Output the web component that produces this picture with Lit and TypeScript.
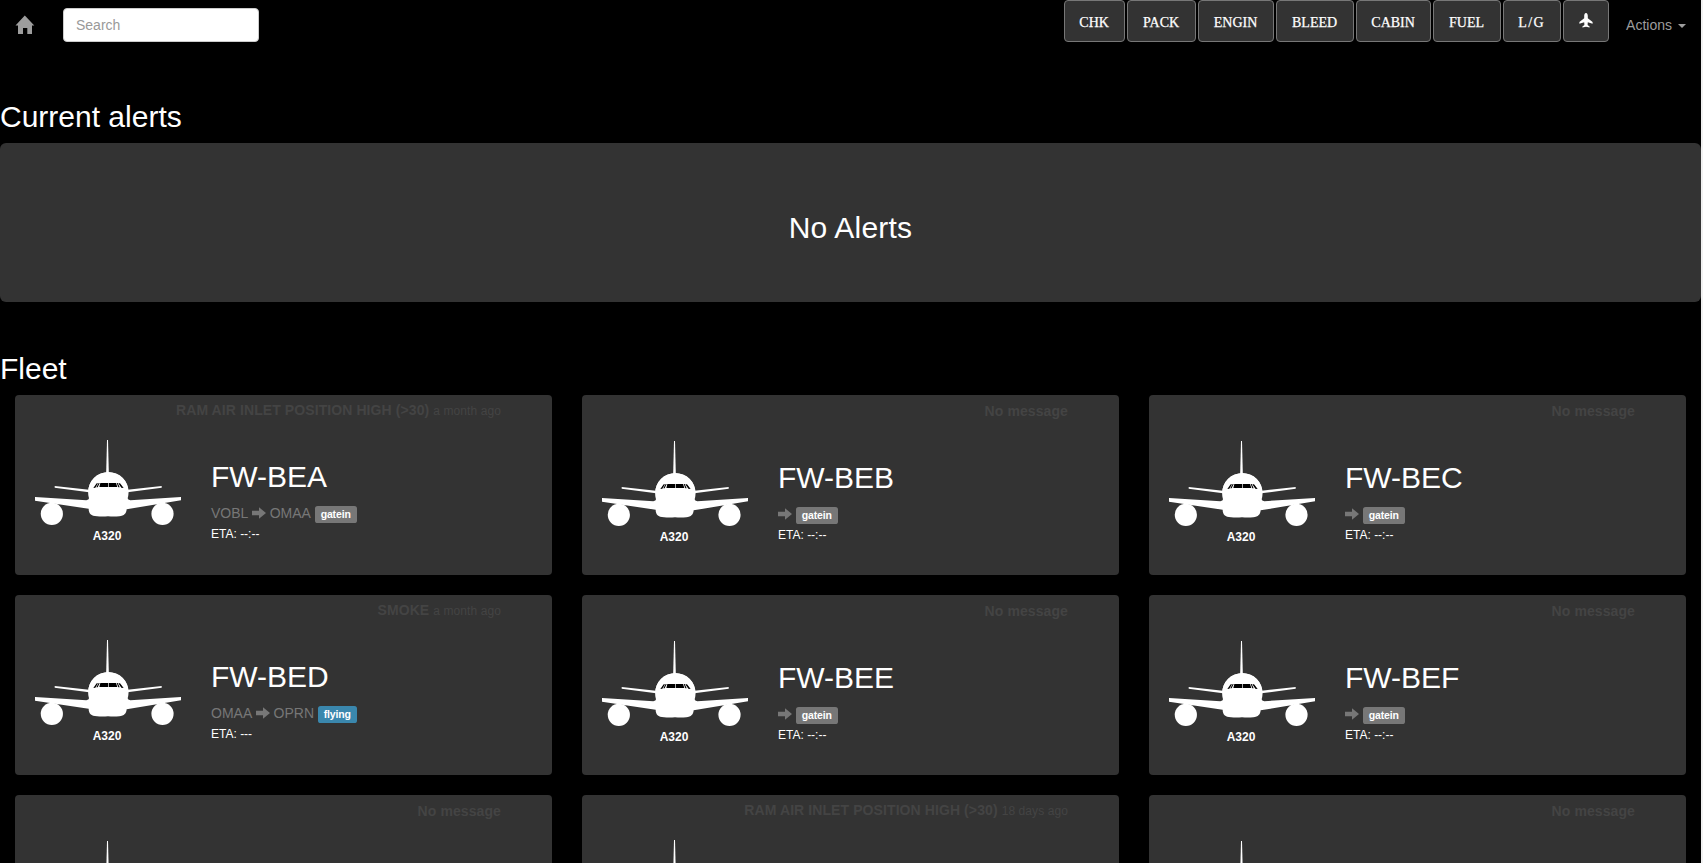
import { LitElement, html, css, svg, nothing } from "lit";
import { customElement, property } from "lit/decorators.js";
import { styleMap } from "lit/directives/style-map.js";

interface Aircraft {
  name: string;
  message?: string;
  age?: string;
  from?: string;
  to?: string;
  status: "gatein" | "flying";
  eta: string;
}

const systems = [
  { label: "CHK", width: 61 },
  { label: "PACK", width: 69 },
  { label: "ENGIN", width: 76 },
  { label: "BLEED", width: 78 },
  { label: "CABIN", width: 75 },
  { label: "FUEL", width: 68 },
  { label: "L/G", width: 58, spacing: 1.3 },
];

const fleet: Aircraft[] = [
  { name: "FW-BEA", message: "RAM AIR INLET POSITION HIGH (>30)", age: "a month ago", from: "VOBL", to: "OMAA", status: "gatein", eta: "--:--" },
  { name: "FW-BEB", status: "gatein", eta: "--:--" },
  { name: "FW-BEC", status: "gatein", eta: "--:--" },
  { name: "FW-BED", message: "SMOKE", age: "a month ago", from: "OMAA", to: "OPRN", status: "flying", eta: "---" },
  { name: "FW-BEE", status: "gatein", eta: "--:--" },
  { name: "FW-BEF", status: "gatein", eta: "--:--" },
  { name: "FW-BEG", status: "gatein", eta: "--:--" },
  { name: "FW-BEH", message: "RAM AIR INLET POSITION HIGH (>30)", age: "18 days ago", status: "gatein", eta: "--:--" },
  { name: "FW-BEI", status: "gatein", eta: "--:--" },
];

const airliner = svg`
  <g fill="#fff">
    <path d="M246 30h3l2.500 100h-8z"/>
    <path d="M89 168l103 11v8L89 173z"/>
    <path d="M410 168l-103 11v8l103-14z"/>
    <path d="M30 201l154 9.500q8-1 8-6C190 198 189.500 193 189.500 186a60.500 60 0 0 1 121 0c0 7-.5 12-2.500 19q0 5 8 5.500L468 201v10l-163 27c-1 12-7 20-22 20.500q-17 1.500-34 0q-17 1.500-33 0c-18-.5-25-8.500-25-22.500L30 212z"/>
    <path d="M189.500 187a60.500 60.500 0 0 1 121 0z"/>
    <circle cx="80.500" cy="251.500" r="33.300"/>
    <circle cx="412.500" cy="251.500" r="33.300"/>
  </g>
  <path fill="#000" d="M226 159h23v12h-26zM251 159h22l4 12h-26zM215 159.500h4l-8 13.500-6 1zM221 159h3l-6 13h-4zM285 159.500h-5l9 13.500 7 1zM278 159h-3l5 13h4z"/>
`;

@customElement("aircraft-card")
export class AircraftCard extends LitElement {
  @property({ attribute: false }) craft!: Aircraft;

  static styles = css`
    :host { display: block; height: 180px; background: #333; border-radius: 4px; overflow: hidden; }
    .inner { padding: 5px 51px 0 20px; }
    .inner.quiet { padding-top: 6px; }
    .message { height: 20px; line-height: 20px; text-align: right; font-size: 14px; letter-spacing: 0.09px; color: #444; white-space: nowrap; }
    .message small { font-size: 12px; }
    .body { display: flex; }
    .picture { width: 146px; padding-top: 20px; text-align: center; }
    .picture svg { display: block; }
    .type { font-size: 12px; line-height: 20px; font-weight: 600; color: #fff; margin-top: 1px; padding-right: 2px; }
    .info { padding: 40px 0 0 30px; }
    .name { margin: 0; font-size: 30px; line-height: 33px; font-weight: 400; color: #fff; }
    .route { display: flex; gap: 3.7px; margin-top: 10px; height: 20px; line-height: 20px; font-size: 14px; color: #777; white-space: nowrap; }
    .arrow { width: 14px; height: 12px; margin-top: 3.500px; fill: #777; }
    .tag { box-sizing: border-box; height: 17px; margin-top: 3px; line-height: 10.5px; padding: 3px 6px; border-radius: 2.6px; font-size: 10.5px; font-weight: 700; letter-spacing: -0.15px; color: #fff; background: #777; }
    .tag.flying { background: #3a87ad; }
    .eta { margin-top: 1px; line-height: 20px; font-size: 12px; color: #fff; }
  `;

  render() {
    const c = this.craft;
    return html`
      <div class="inner ${c.message ? "" : "quiet"}">
        <div class="message">
          <b>${c.message ?? "No message"}</b>${c.age ? html` <small>${c.age}</small>` : nothing}
        </div>
        <div class="body">
          <div class="picture">
            <svg width="146" height="85" viewBox="30 30 438 255">${airliner}</svg>
            <div class="type">A320</div>
          </div>
          <div class="info">
            <h2 class="name">${c.name}</h2>
            <div class="route">
              ${c.from ? html`<span>${c.from}</span>` : nothing}
              <svg class="arrow" viewBox="0 0 14 12"><path d="M0 3.800h7V.3L14 6 7 11.700V8.200H0z"/></svg>
              ${c.to ? html`<span>${c.to}</span>` : nothing}
              <span class="tag ${c.status}">${c.status}</span>
            </div>
            <div class="eta">ETA: ${c.eta}</div>
          </div>
        </div>
      </div>
    `;
  }
}

@customElement("app-root")
export class AppRoot extends LitElement {
  static styles = css`
    :host { display: block; box-sizing: border-box; height: 863px; overflow: hidden; background: #000; border-right: 2px solid #f1f1f1; color: #fff; font-family: "Liberation Sans", Arial, sans-serif; font-size: 14px; line-height: 20px; }
    .nav { display: flex; height: 50px; }
    .home { padding: 15px 0 0 15px; width: 63px; box-sizing: border-box; }
    .home svg { display: block; fill: #9d9d9d; }
    .search { box-sizing: border-box; margin: 8px 0 0; width: 196px; height: 34px; padding: 0 12px; border: 1px solid #ccc; border-radius: 4px; background: #fff; font: inherit; color: #555; }
    .search::placeholder { color: #999; opacity: 1; }
    .systems { display: flex; gap: 2px; margin-left: auto; height: 42px; }
    .system { box-sizing: border-box; display: flex; align-items: center; justify-content: center; height: 42px; padding: 3px 1px 0 0; border: 1px solid #777; border-radius: 4px; background: #333; color: #fff; font: 14px/20px "Liberation Serif", serif; -webkit-text-stroke: 0.25px #fff; }
    .system svg { fill: #fff; margin: 0 0 5px 1px; }
    .actions { display: flex; padding: 15px 15px 0 17px; color: #9d9d9d; }
    .caret { margin: 9px 0 0 6px; width: 0; height: 0; border: 4px solid transparent; border-top-color: #9d9d9d; border-bottom: 0; }
    .title { margin: 0; padding: 50px 0 10px; font-size: 30px; line-height: 33px; font-weight: 400; }
    .alerts { height: 159px; display: flex; justify-content: center; padding-top: 68px; box-sizing: border-box; border-radius: 6px; background: #333; font-size: 30px; line-height: 33px; letter-spacing: 0.2px; }
    .fleet { display: grid; grid-template-columns: repeat(3, 537px); gap: 20px 30px; padding: 0 15px; }
  `;

  render() {
    return html`
      <div class="nav">
        <div class="home">
          <svg width="20" height="20" viewBox="0 0 20 20"><path d="M9.800.6L19.300 10.400H17V19h-4.700v-6H8v6H3v-8.600H.5z"/></svg>
        </div>
        <input class="search" type="text" placeholder="Search" />
        <div class="systems">
          ${systems.map((s) => html`<button class="system" style=${styleMap({ width: `${s.width}px`, letterSpacing: `${s.spacing ?? 0}px` })}>${s.label}</button>`)}
          <button class="system" style=${styleMap({ width: "46px" })}>
            <svg width="14" height="15" viewBox="0 0 14 15"><path d="M7 0C8.300 0 8.800 1.500 8.800 3v2.200L13.600 9v1.800L8.800 9.300 8.600 12l2 1.500v1L7 13.700l-3.600.8v-1l2-1.500-.2-2.700L.4 10.800V9l4.800-3.800V3C5.200 1.500 5.700 0 7 0z"/></svg>
          </button>
        </div>
        <div class="actions">Actions<span class="caret"></span></div>
      </div>
      <h2 class="title">Current alerts</h2>
      <div class="alerts">No Alerts</div>
      <h2 class="title">Fleet</h2>
      <div class="fleet">${fleet.map((c) => html`<aircraft-card .craft=${c}></aircraft-card>`)}</div>
    `;
  }
}
